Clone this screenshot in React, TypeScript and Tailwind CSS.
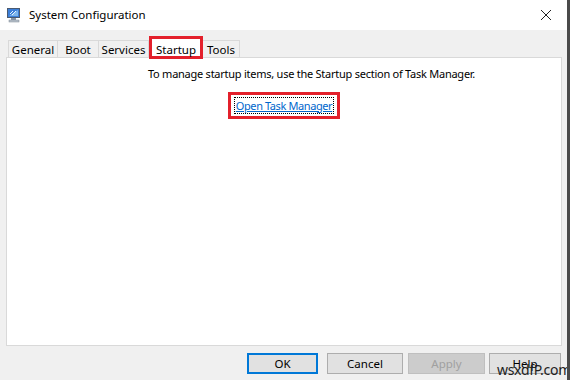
import React from "react";

const font = { fontFamily: '"Noto Sans", "Liberation Sans", sans-serif' };

function Tab({ label, w, selected }: { label: string; w: string; selected?: boolean }) {
  if (selected) {
    return (
      <div className={`${w} h-[23px] -mb-[2px] relative z-10 border-[3px] border-[#e3202b] bg-white flex items-start justify-center pt-[2px] text-[11.5px] text-black`}>
        {label}
      </div>
    );
  }
  return (
    <div className={`${w} h-[17px] mt-[4px] border border-b-0 border-[#d9d9d9] -ml-px first:ml-0 bg-[#f0f0f0] flex items-center justify-center pt-[1px] text-[11.5px] text-black`}>
      {label}
    </div>
  );
}

function Btn({ label, cls: extra, variant }: { label: string; cls: string; variant?: "default" | "disabled" }) {
  const cls =
    variant === "default"
      ? "border-2 border-[#0078d7] bg-[#e1e1e1] text-black"
      : variant === "disabled"
      ? "border border-[#bfbfbf] bg-[#cccccc] text-[#a0a0a0]"
      : "border border-[#adadad] bg-[#e1e1e1] text-black";
  return (
    <div className={`${extra} h-[21px] flex items-center justify-center text-[11.5px] ${cls}`}>{label}</div>
  );
}

export default function App() {
  return (
    <div className="w-[570px] h-[380px] relative overflow-hidden bg-[#f0f0f0] flex flex-col border-r-[3px] border-[#4a4a4a]" style={font}>
      {/* Title bar */}
      <div className="h-[30px] bg-white flex items-center shrink-0">
        <svg width="16" height="16" viewBox="0 0 16 16" className="ml-[6px]">
          <rect x="1.5" y="1.5" width="12" height="9" fill="#3b7ed8" stroke="#4a5a70" />
          <path d="M3 9 L12 3 L12 9 Z" fill="#8fc3f2" opacity="0.8" />
          <path d="M4 7 l3 -3 M6 8 l4 -4" stroke="#e8f4ff" strokeWidth="1" />
          <rect x="5" y="11" width="5" height="2" fill="#8a96a6" />
          <rect x="3" y="13" width="10" height="2" fill="#b9c2cc" stroke="#7d8895" strokeWidth="0.5" />
        </svg>
        <span className="ml-[7px] text-[11.5px] text-black">System Configuration</span>
        <div className="ml-auto mr-[15px] w-[12px] h-[12px]">
          <svg width="12" height="12" viewBox="0 0 12 12">
            <path d="M1 1 L11 11 M11 1 L1 11" stroke="#222" strokeWidth="1" />
          </svg>
        </div>
      </div>

      {/* Body */}
      <div className="flex-1 flex flex-col px-[6px] pr-[5px] pt-[6px]">
        <div className="flex items-start pl-[2px] h-[21px]">
          <Tab label="General" w="w-[50px]" />
          <Tab label="Boot" w="w-[42px]" />
          <Tab label="Services" w="w-[51px]" />
          <Tab label="Startup" w="w-[54px]" selected />
          <Tab label="Tools" w="w-[38px]" />
        </div>
        <div className="h-[289px] bg-white border border-[#d9d9d9] flex flex-col items-center">
          <div className="self-start ml-[141px] mt-[8px] text-[11px] text-black tracking-[-0.25px]">
            To manage startup items, use the Startup section of Task Manager.
          </div>
          <div className="mt-[9px] border-[3px] border-[#e3202b] px-[3px] py-[2px]">
            <div className="border border-dotted border-black px-[1px] leading-[15px] text-[11px] text-[#0066cc] underline tracking-[-0.4px]">
              Open Task Manager
            </div>
          </div>
        </div>
        <div className="flex justify-end mt-[7px] pr-[1px]">
          <Btn label="OK" cls="w-[71px]" variant="default" />
          <Btn label="Cancel" cls="w-[76px] ml-[9px]" />
          <Btn label="Apply" cls="w-[77px] ml-[5px]" variant="disabled" />
          <Btn label="Help" cls="w-[72px] ml-[4px]" />
        </div>
      </div>

      <div className="absolute left-[497px] top-[362px] text-[14px] leading-[16px] text-[#222] tracking-[-0.3px]">
        wsxdfP.com
      </div>
    </div>
  );
}
